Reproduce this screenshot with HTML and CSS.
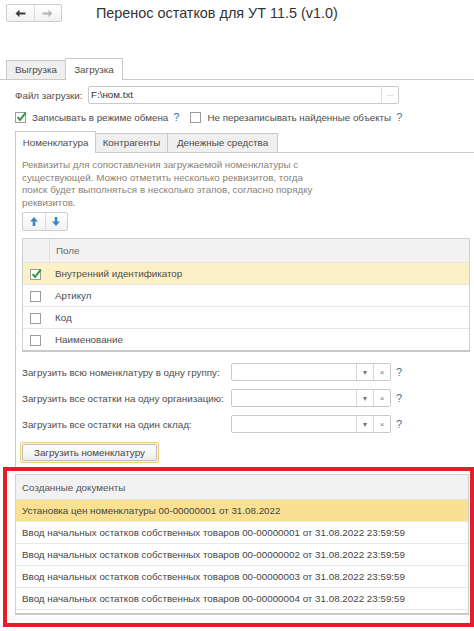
FILE: index.html
```html
<!DOCTYPE html>
<html lang="ru">
<head>
  <meta charset="UTF-8" />
  <meta name="viewport" content="width=device-width, initial-scale=1.0"/>
  <title>Перенос остатков для УТ 11.5 (v1.0)</title>
  <link rel="stylesheet" href="styles.css">
</head>
<body>

  <div class="topbar">
    <div class="nav">
      <span class="nav-btn">
        <svg width="11" height="9" viewBox="0 0 11 9"><path d="M0.5 4.5 L4.5 0.8 V3.5 H10.5 V5.5 H4.5 V8.2 Z" fill="#3c3c3c"/></svg>
      </span>
      <span class="nav-btn">
        <svg width="11" height="9" viewBox="0 0 11 9"><path d="M10.5 4.5 L6.5 0.8 V3.5 H0.5 V5.5 H6.5 V8.2 Z" fill="#b4b4b4"/></svg>
      </span>
    </div>
    <div class="title">Перенос остатков для УТ 11.5 (v1.0)</div>
  </div>

  <div class="tabs outer">
    <div class="tab" style="width:60px">Выгрузка</div>
    <div class="tab active" style="width:58px">Загрузка</div>
  </div>

  <div class="page">
    <div class="file-row">
      <span class="file-label">Файл загрузки:</span>
      <span class="file-input">F:\ном.txt</span>
      <span class="file-btn">...</span>
    </div>

    <div class="check-row">
      <svg class="check" width="12" height="12" viewBox="0 0 12 12">
        <rect x="0.5" y="1.5" width="10" height="10" fill="#fff" stroke="#9c9c9c"/>
        <path d="M2.6 6.2 L5 9 L10.8 1.6" fill="none" stroke="#2f9a35" stroke-width="2"/>
      </svg>
      <span class="check-text">Записывать в режиме обмена</span>
      <span class="help">?</span>
      <svg class="check second" width="12" height="12" viewBox="0 0 12 12">
        <rect x="0.5" y="1.5" width="10" height="10" fill="#fff" stroke="#9c9c9c"/>
      </svg>
      <span class="check-text">Не перезаписывать найденные объекты</span>
      <span class="help">?</span>
    </div>

    <div class="tabs inner">
      <div class="tab active" style="width:81px">Номенклатура</div>
      <div class="tab" style="width:73px">Контрагенты</div>
      <div class="tab" style="width:111px">Денежные средства</div>
    </div>

    <div class="inner-panel">
      <div class="hint">
        Реквизиты для сопоставления загружаемой номенклатуры с<br>
        существующей. Можно отметить несколько реквизитов, тогда<br>
        поиск будет выполняться в несколько этапов, согласно порядку<br>
        реквизитов.
      </div>

      <div class="arrows">
        <span class="arrow-btn">
          <svg width="8" height="9" viewBox="0 0 8 9"><path d="M4 0 L8 4.5 H5.3 V9 H2.7 V4.5 H0 Z" fill="#3f83c9"/></svg>
        </span>
        <span class="arrow-btn">
          <svg width="8" height="9" viewBox="0 0 8 9"><path d="M4 9 L8 4.5 H5.3 V0 H2.7 V4.5 H0 Z" fill="#3f83c9"/></svg>
        </span>
      </div>

      <div class="grid">
        <div class="grid-head">
          <span class="cell-check"></span>
          <span class="cell-text">Поле</span>
        </div>
        <div class="grid-row selected">
          <span class="cell-check">
            <svg width="12" height="12" viewBox="0 0 12 12">
              <rect x="0.5" y="1.5" width="10" height="10" fill="#fff" stroke="#9c9c9c"/>
              <path d="M2.6 6.2 L5 9 L10.8 1.6" fill="none" stroke="#2f9a35" stroke-width="2"/>
            </svg>
          </span>
          <span class="cell-text">Внутренний идентификатор</span>
        </div>
        <div class="grid-row">
          <span class="cell-check"><svg width="12" height="12" viewBox="0 0 12 12"><rect x="0.5" y="1.5" width="10" height="10" fill="#fff" stroke="#9c9c9c"/></svg></span>
          <span class="cell-text">Артикул</span>
        </div>
        <div class="grid-row">
          <span class="cell-check"><svg width="12" height="12" viewBox="0 0 12 12"><rect x="0.5" y="1.5" width="10" height="10" fill="#fff" stroke="#9c9c9c"/></svg></span>
          <span class="cell-text">Код</span>
        </div>
        <div class="grid-row">
          <span class="cell-check"><svg width="12" height="12" viewBox="0 0 12 12"><rect x="0.5" y="1.5" width="10" height="10" fill="#fff" stroke="#9c9c9c"/></svg></span>
          <span class="cell-text">Наименование</span>
        </div>
      </div>

      <div class="form-row first">
        <span class="form-label">Загрузить всю номенклатуру в одну группу:</span>
        <span class="combo">
          <span class="combo-field"></span>
          <span class="combo-btn">▾</span>
          <span class="combo-btn">×</span>
        </span>
        <span class="help">?</span>
      </div>
      <div class="form-row">
        <span class="form-label">Загрузить все остатки на одну организацию:</span>
        <span class="combo">
          <span class="combo-field"></span>
          <span class="combo-btn">▾</span>
          <span class="combo-btn">×</span>
        </span>
        <span class="help">?</span>
      </div>
      <div class="form-row">
        <span class="form-label">Загрузить все остатки на один склад:</span>
        <span class="combo">
          <span class="combo-field"></span>
          <span class="combo-btn">▾</span>
          <span class="combo-btn">×</span>
        </span>
        <span class="help">?</span>
      </div>

      <div class="load-btn"><span class="load-btn-inner">Загрузить номенклатуру</span></div>
    </div>
  </div>

  <div class="highlight">
    <div class="docs">
      <div class="docs-head">Созданные документы</div>
      <div class="docs-row current">Установка цен номенклатуры 00-00000001 от 31.08.2022</div>
      <div class="docs-row">Ввод начальных остатков собственных товаров 00-00000001 от 31.08.2022 23:59:59</div>
      <div class="docs-row">Ввод начальных остатков собственных товаров 00-00000002 от 31.08.2022 23:59:59</div>
      <div class="docs-row">Ввод начальных остатков собственных товаров 00-00000003 от 31.08.2022 23:59:59</div>
      <div class="docs-row">Ввод начальных остатков собственных товаров 00-00000004 от 31.08.2022 23:59:59</div>
    </div>
  </div>

</body>
</html>
```

FILE: styles.css
```css
body {
  margin: 0;
  font-family: "Liberation Sans", Arial, sans-serif;
  font-size: 9.8px;
  color: #4d4d4d;
  background: #fff;
}

/* top bar */
.topbar {
  display: flex;
  align-items: flex-start;
  height: 58px;
  box-sizing: border-box;
  padding: 4px 0 0 6px;
}

.nav {
  display: flex;
  width: 56px;
  height: 18px;
  box-sizing: border-box;
  border: 1px solid #cdcdcd;
  border-radius: 2px;
  background: linear-gradient(#fff, #f1f1f1);
}

.nav-btn {
  flex: 1;
  display: flex;
  align-items: center;
  justify-content: center;
}

.nav-btn + .nav-btn {
  border-left: 1px solid #dadada;
}

.title {
  margin-left: 34px;
  font-size: 14.4px;
  line-height: 18px;
  color: #333;
}

/* tabs */
.tabs {
  display: flex;
  align-items: flex-end;
  height: 21px;
  border-bottom: 1px solid #c9c9c9;
}

.tabs.outer {
  padding-left: 6px;
}

.tabs.inner {
  margin-top: 7px;
}

.tab {
  height: 19px;
  line-height: 18px;
  box-sizing: border-box;
  border: 1px solid #c9c9c9;
  border-bottom: none;
  background: #efefef;
  text-align: center;
  color: #4d4d4d;
}

.tab + .tab {
  margin-left: -1px;
}

.tab.active {
  height: 22px;
  line-height: 21px;
  margin-bottom: -1px;
  background: #fff;
}

.page {
  padding-left: 15px;
}

/* file row */
.file-row {
  display: flex;
  align-items: center;
  height: 18px;
  margin-top: 6px;
}

.file-label {
  width: 73px;
}

.file-input {
  width: 294px;
  height: 18px;
  box-sizing: border-box;
  border: 1px solid #c9c9c9;
  border-radius: 2px 0 0 2px;
  padding-left: 2px;
  line-height: 16px;
  color: #333;
}

.file-btn {
  width: 18px;
  height: 18px;
  box-sizing: border-box;
  border: 1px solid #c9c9c9;
  border-left: 1px solid #dcdcdc;
  border-radius: 0 2px 2px 0;
  text-align: center;
  line-height: 14px;
  font-size: 8px;
  color: #999;
  margin-left: -1px;
}

/* checkboxes */
.check-row {
  display: flex;
  align-items: center;
  height: 14px;
  margin-top: 6px;
}

.check {
  overflow: visible;
}

.check.second {
  margin-left: 11px;
}

.check-text {
  margin-left: 5px;
}

.help {
  margin-left: 5px;
  color: #3d6fad;
  font-size: 11px;
}

/* inner tab panel */
.inner-panel {
  border-left: 1px solid #c9c9c9;
  padding: 6px 4px 4px 6px;
}

.hint {
  line-height: 12.5px;
  color: #8a7f75;
}

.arrows {
  display: flex;
  width: 46px;
  height: 19px;
  margin-top: 3px;
  box-sizing: border-box;
  border: 1px solid #cdcdcd;
  border-radius: 2px;
  background: linear-gradient(#fff, #f1f1f1);
}

.arrow-btn {
  flex: 1;
  display: flex;
  align-items: center;
  justify-content: center;
}

.arrow-btn + .arrow-btn {
  border-left: 1px solid #dadada;
}

/* grid */
.grid {
  margin-top: 7px;
  border: 1px solid #d0d0d0;
  border-bottom: 2px solid #c8c8c8;
}

.grid-head {
  display: flex;
  height: 23px;
  background: #f2f2f2;
  border-bottom: 1px solid #e2e2e2;
  color: #666;
}

.grid-head .cell-check {
  border-right: 1px solid #e0e0e0;
}

.grid-row {
  display: flex;
  height: 21px;
  border-bottom: 1px solid #e6e6e6;
}

.grid-row:last-child {
  border-bottom: none;
}

.grid-row.selected {
  background: #fcf1c6;
}

.cell-check {
  width: 26px;
  display: flex;
  align-items: center;
  justify-content: center;
}

.cell-text {
  display: flex;
  align-items: center;
  padding-left: 6px;
}

/* form rows */
.form-row {
  display: flex;
  align-items: center;
  height: 18px;
  margin-top: 8px;
}

.form-row.first {
  margin-top: 11px;
}

.form-label {
  width: 209px;
}

.combo {
  display: flex;
  width: 160px;
  height: 18px;
  box-sizing: border-box;
  border: 1px solid #c9c9c9;
  border-radius: 2px;
}

.combo-field {
  flex: 1;
}

.combo-btn {
  width: 16px;
  border-left: 1px solid #d8d8d8;
  display: flex;
  align-items: center;
  justify-content: center;
  font-size: 8px;
  color: #777;
}

/* button */
.load-btn {
  display: inline-block;
  margin: 9px 0 0 -2px;
  padding: 1px;
  border: 1px solid #e8d074;
  border-radius: 2px;
  background: #fdf5d6;
}

.load-btn-inner {
  display: block;
  height: 15px;
  line-height: 15px;
  padding: 0 11px;
  border: 1px solid #bdbdbd;
  border-radius: 2px;
  background: linear-gradient(#fff, #ececec);
  color: #444;
}

/* created documents */
.highlight {
  margin-left: 3px;
  border: 4px solid #e31e2a;
  padding: 3px 1px 8px 8px;
}

.docs {
  border: 1px solid #d0d0d0;
  border-bottom: 2px solid #c8c8c8;
  padding-bottom: 3px;
}

.docs-head {
  display: flex;
  align-items: center;
  height: 24px;
  padding-left: 6px;
  background: #f2f2f2;
  border-bottom: 1px solid #e0e0e0;
  color: #555;
}

.docs-row {
  display: flex;
  align-items: center;
  height: 21px;
  padding-left: 6px;
  border-bottom: 1px solid #e8e8e8;
  color: #454545;
}

.docs-row.current {
  background: #fae091;
}
```
